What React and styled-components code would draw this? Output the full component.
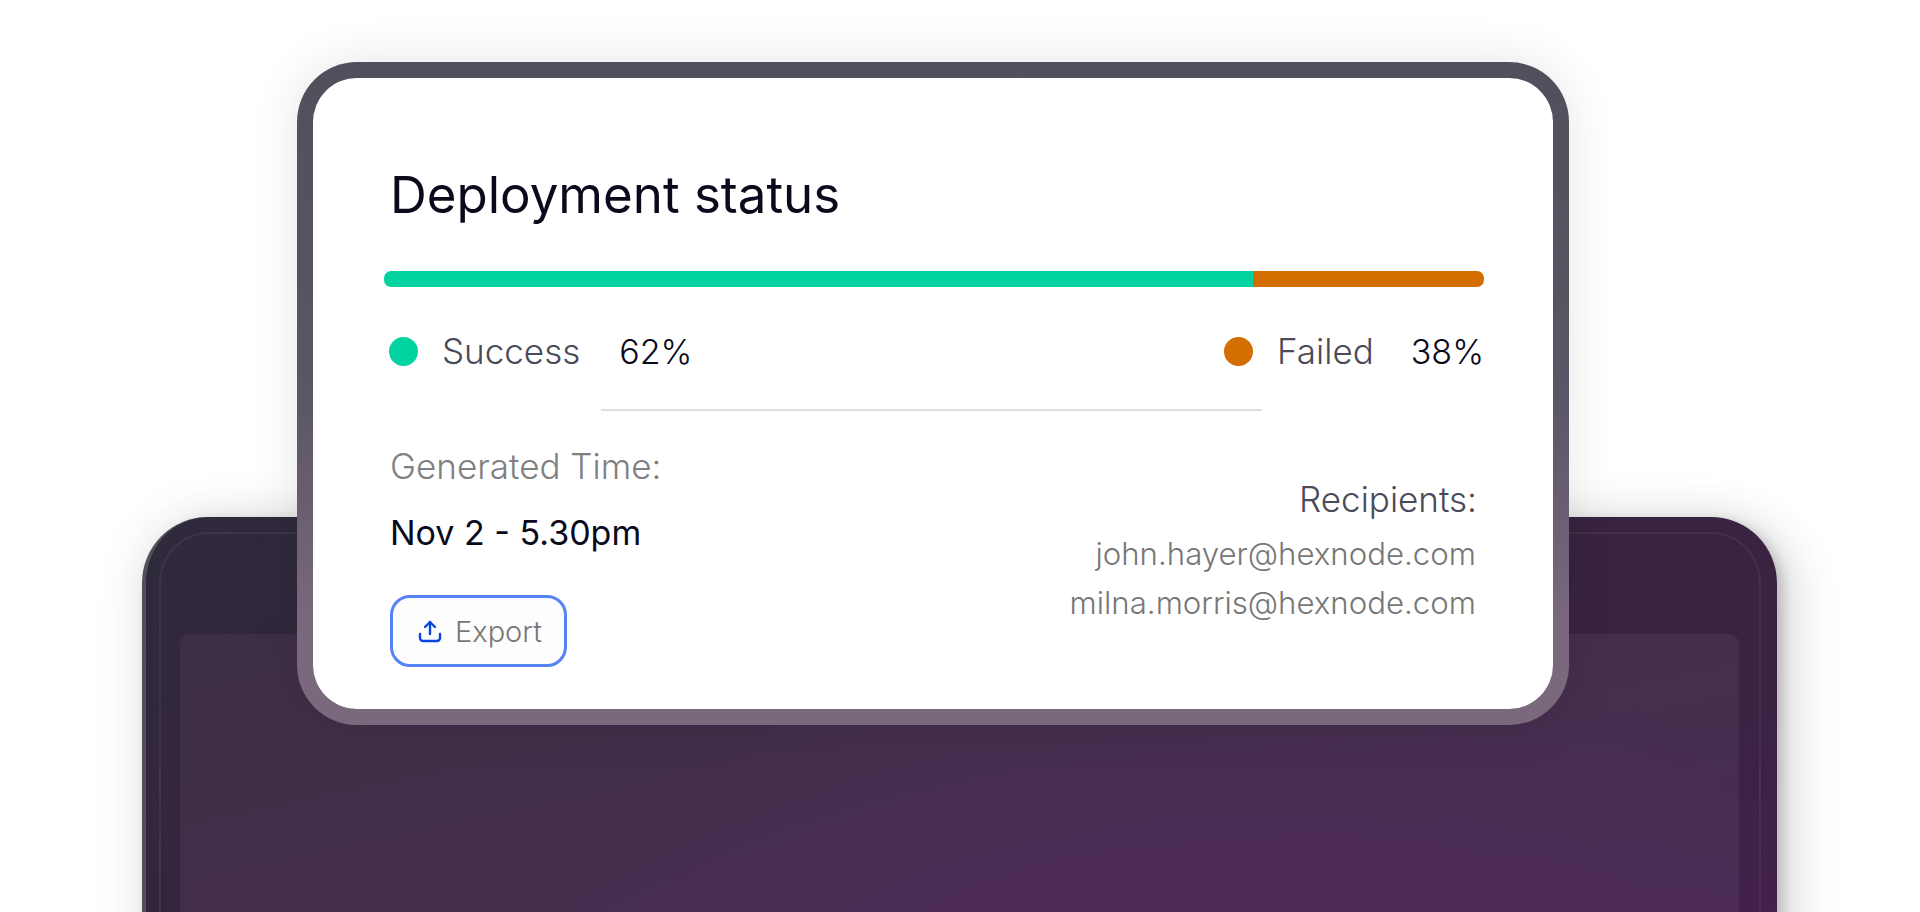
import styled, { createGlobalStyle } from 'styled-components'

const GlobalStyle = createGlobalStyle`
  * { box-sizing: border-box; }
  html, body { margin: 0; background: #fff; }
  body { font-family: Inter, "Liberation Sans", sans-serif; }
`

const Stage = styled.div`
  position: relative;
  width: 1920px;
  height: 912px;
  padding: 517px 143px 0 142px;
  overflow: hidden;
  background: #fff;
`
const Device = styled.div`
  height: 520px;
  padding: 15px 16px 0 13px;
  border-radius: 66px 66px 0 0;
  background: linear-gradient(155deg, #2f2a3c 0%, #37233f 45%, #3a2342 70%, #47214f 100%);
  box-shadow: 6px 4px 12px rgba(0, 0, 0, 0.16), 20px 10px 50px rgba(0, 0, 0, 0.1), 0 0 50px rgba(0, 0, 0, 0.1);
  border-left: 4px solid #50505c;
`
const DeviceInner = styled.div`
  height: 100%;
  padding: 100px 20px 0 19px;
  border: 2px solid rgba(255, 255, 255, 0.06);
  border-bottom: none;
  border-radius: 50px 50px 0 0;
`
const Screen = styled.div`
  height: 100%;
  border-radius: 10px 10px 0 0;
  background:
    radial-gradient(ellipse 820px 380px at 68% 100%, #512a5a 0%, rgba(81, 42, 90, 0) 100%),
    linear-gradient(168deg, #3c2f45 0%, #452e4e 50%, #4a2b54 100%);
`

const Card = styled.div`
  position: absolute;
  top: 62px;
  left: 297px;
  width: 1272px;
  height: 663px;
  padding: 16px;
  border-radius: 60px;
  background: linear-gradient(180deg, #50505c 0%, #5a5665 50%, #7a687d 85%);
  box-shadow: 0 0 50px rgba(0, 0, 0, 0.1);
`
const CardBody = styled.div`
  height: 100%;
  padding: 80px 69px 0 71px;
  border-radius: 44px;
  background: #fff;
`
const Title = styled.h1`
  margin: 0 0 40px 6px;
  font-size: 51px;
  line-height: 73px;
  font-weight: 400;
  color: #0a0a1c;
`
const Bar = styled.div`
  display: flex;
  height: 16px;
  border-radius: 7px;
  overflow: hidden;
`
const BarPart = styled.div`
  width: ${p => p.$width}px;
  flex: ${p => (p.$width ? 'none' : 1)};
  background: ${p => p.$color};
`
const Legend = styled.div`
  display: flex;
  justify-content: space-between;
  margin: 44px 0 0 5px;
`
const LegendItem = styled.div`
  display: flex;
  align-items: center;
  height: 40px;
`
const Dot = styled.span`
  width: 29px;
  height: 29px;
  margin-right: 24px;
  border-radius: 50%;
  background: ${p => p.$color};
`
const LegendLabel = styled.span`
  margin-right: ${p => p.$gap}px;
  font-size: 35px;
  font-weight: 300;
  color: #4a4a58;
`
const LegendValue = styled.span`
  font-size: 34px;
  font-weight: 300;
  color: #0a0a1c;
`
const Divider = styled.hr`
  width: 661px;
  height: 2px;
  margin: 38px 0 0 217px;
  border: 0;
  background: #dedede;
`
const Details = styled.div`
  display: flex;
  justify-content: space-between;
  padding: 0 7px 0 6px;
`
const Generated = styled.div`
  padding-top: 35px;
`
const GeneratedLabel = styled.div`
  font-size: 35px;
  line-height: 40px;
  font-weight: 300;
  color: #808080;
`
const GeneratedValue = styled.div`
  margin-top: 27px;
  font-size: 34px;
  line-height: 40px;
  font-weight: 400;
  color: #0a0a1c;
`
const ExportButton = styled.button`
  display: flex;
  align-items: center;
  width: 177px;
  height: 72px;
  margin-top: 42px;
  padding: 0 0 0 25px;
  border: 3px solid #5582f5;
  border-radius: 20px;
  background: #fdfdfd;
  font-family: inherit;
  font-size: 29px;
  font-weight: 300;
  color: #777;
`
const ExportIcon = styled.svg`
  width: 24px;
  height: 24px;
  margin-right: 13px;
  fill: none;
  stroke: #0b45e0;
  stroke-width: 2.4;
  stroke-linecap: round;
  stroke-linejoin: round;
`
const Recipients = styled.div`
  padding-top: 66px;
  text-align: right;
`
const RecipientsLabel = styled.div`
  font-size: 35px;
  line-height: 44px;
  font-weight: 300;
  color: #4a4a58;
`
const Email = styled.div`
  margin-top: ${p => p.$top}px;
  padding-right: 1px;
  font-size: 31.2px;
  line-height: 40px;
  font-weight: 300;
  color: #777;
`

const App = () => {
  return (
    <Stage>
      <GlobalStyle />
      <Device>
        <DeviceInner>
          <Screen />
        </DeviceInner>
      </Device>
      <Card>
        <CardBody>
          <Title>Deployment status</Title>
          <Bar>
            <BarPart $width={869} $color="#03d3a1" />
            <BarPart $color="#d26e02" />
          </Bar>
          <Legend>
            <LegendItem>
              <Dot $color="#03d3a1" />
              <LegendLabel $gap={39}>Success</LegendLabel>
              <LegendValue>62%</LegendValue>
            </LegendItem>
            <LegendItem>
              <Dot $color="#d26e02" />
              <LegendLabel $gap={37}>Failed</LegendLabel>
              <LegendValue>38%</LegendValue>
            </LegendItem>
          </Legend>
          <Divider />
          <Details>
            <Generated>
              <GeneratedLabel>Generated Time:</GeneratedLabel>
              <GeneratedValue>Nov 2 - 5.30pm</GeneratedValue>
              <ExportButton>
                <ExportIcon viewBox="0 0 24 24">
                  <path d="M12 15V3" />
                  <path d="M7 8l5-5 5 5" />
                  <path d="M2 15v4a3 3 0 0 0 3 3h14a3 3 0 0 0 3-3v-4" />
                </ExportIcon>
                Export
              </ExportButton>
            </Generated>
            <Recipients>
              <RecipientsLabel>Recipients:</RecipientsLabel>
              <Email $top={13}>john.hayer@hexnode.com</Email>
              <Email $top={9}>milna.morris@hexnode.com</Email>
            </Recipients>
          </Details>
        </CardBody>
      </Card>
    </Stage>
  )
}

export default App
